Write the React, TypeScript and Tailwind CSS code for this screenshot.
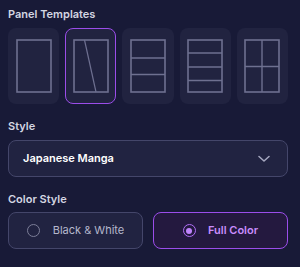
import React from "react";

const stroke = "#6e7090";

function Tpl({ kind }: { kind: number }) {
  return (
    <svg width="36" height="54" viewBox="0 0 36 54" fill="none">
      <rect x="1" y="1" width="34" height="52" stroke={stroke} strokeWidth="1.6" />
      {kind === 1 && <line x1="11.5" y1="1" x2="23" y2="53" stroke={stroke} strokeWidth="1.2" />}
      {kind === 2 && (
        <>
          <line x1="1" y1="19" x2="35" y2="19" stroke={stroke} strokeWidth="1.4" />
          <line x1="1" y1="35.5" x2="35" y2="35.5" stroke={stroke} strokeWidth="1.4" />
        </>
      )}
      {kind === 3 && (
        <>
          <line x1="1" y1="14" x2="35" y2="14" stroke={stroke} strokeWidth="1.4" />
          <line x1="1" y1="28" x2="35" y2="28" stroke={stroke} strokeWidth="1.4" />
          <line x1="1" y1="41.5" x2="35" y2="41.5" stroke={stroke} strokeWidth="1.4" />
        </>
      )}
      {kind === 4 && (
        <>
          <line x1="18" y1="1" x2="18" y2="53" stroke={stroke} strokeWidth="1.4" />
          <line x1="1" y1="27.5" x2="35" y2="27.5" stroke={stroke} strokeWidth="1.4" />
        </>
      )}
    </svg>
  );
}

export default function App() {
  const font = { fontFamily: "Inter, 'Noto Sans', sans-serif" };
  return (
    <div className="w-[300px] h-[267px] bg-[#181a37] pl-2 pr-3 pt-[6px]" style={font}>
      <div className="text-[11px] font-semibold text-[#d4d6e2] leading-[16px]">Panel Templates</div>
      <div className="mt-[6px] grid grid-cols-5 gap-1.5">
        {[0, 1, 2, 3, 4].map((k) => (
          <div
            key={k}
            className={
              "h-[76px] rounded-lg flex items-center justify-center bg-[#212340] " +
              (k === 1 ? "border-[1.5px] border-[#9b4dea]" : "")
            }
          >
            <Tpl kind={k} />
          </div>
        ))}
      </div>
      <div className="mt-[14px] text-[11px] font-semibold text-[#d4d6e2] leading-[16px]">Style</div>
      <div className="mt-[6px] h-[37px] rounded-lg border border-[#44466a] bg-[#212341] flex items-center justify-between pl-[14px] pr-[17px]">
        <span className="text-[11px] font-semibold text-white">Japanese Manga</span>
        <svg width="12" height="8" viewBox="0 0 12 8" fill="none">
          <path d="M1 1.5 L6 6 L11 1.5" stroke="#a6a8c0" strokeWidth="1.5" strokeLinecap="round" strokeLinejoin="round" />
        </svg>
      </div>
      <div className="mt-[14px] text-[11px] font-semibold text-[#d4d6e2] leading-[16px]">Color Style</div>
      <div className="mt-[5px] grid grid-cols-2 gap-[10px]">
        <div className="h-[37px] rounded-lg border border-[#44466a] bg-[#212341] flex items-center justify-center gap-[13px]">
          <span className="w-[13px] h-[13px] rounded-full border-[1.5px] border-[#7c7e98]" />
          <span className="text-[11px] text-[#b6b8cc]">Black &amp; White</span>
        </div>
        <div className="h-[37px] rounded-lg border border-[#9b4dea] bg-[#24193f] flex items-center justify-center gap-[12px]">
          <span className="w-[13px] h-[13px] rounded-full border-[1.5px] border-[#b06ef5] flex items-center justify-center">
            <span className="w-[6px] h-[6px] rounded-full bg-[#c084fc]" />
          </span>
          <span className="text-[11px] font-semibold text-[#c98cfc]">Full Color</span>
        </div>
      </div>
    </div>
  );
}
